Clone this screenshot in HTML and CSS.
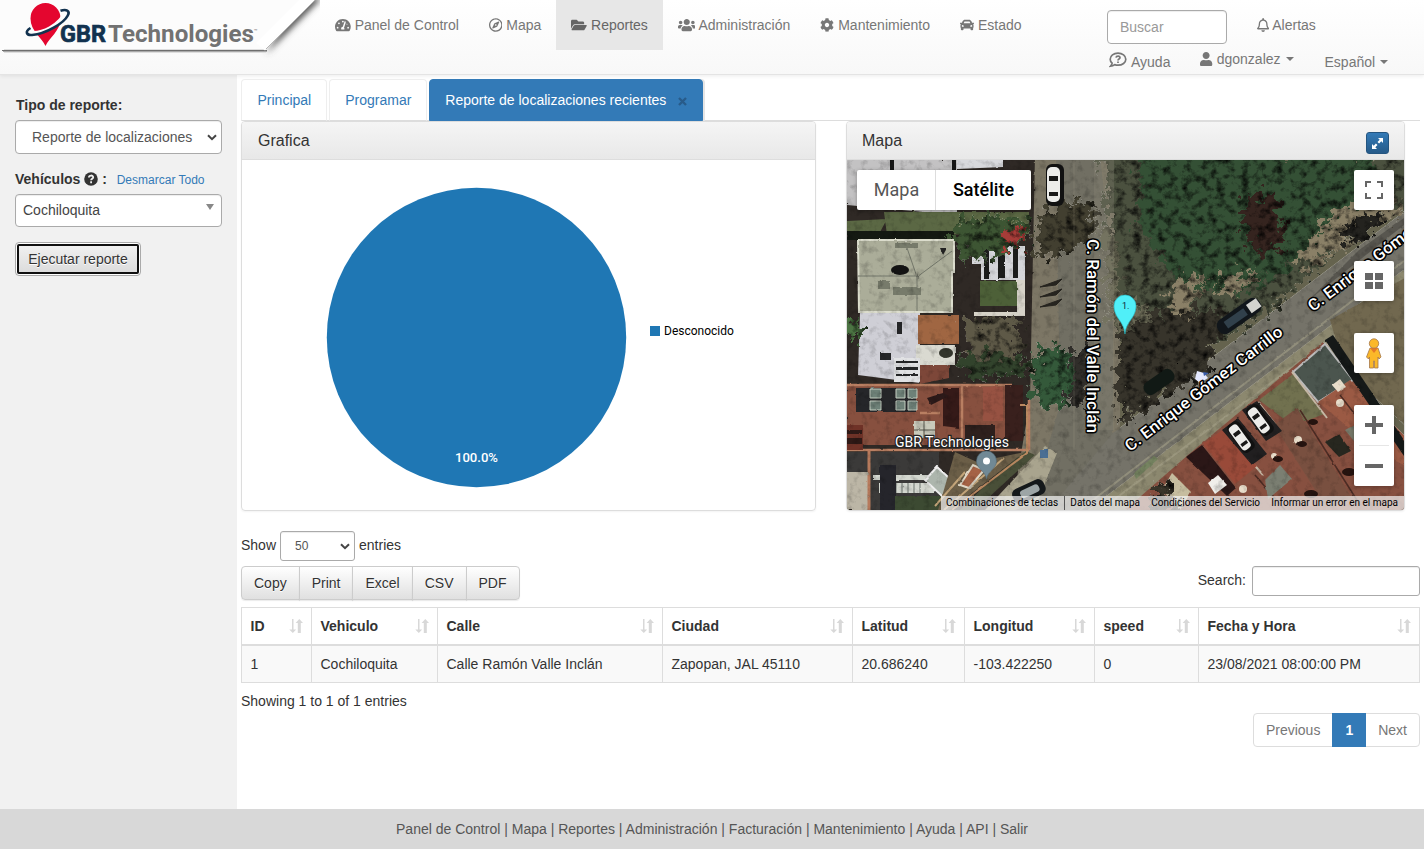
FILE: index.html
```
<!DOCTYPE html>
<html lang="es">
<head>
<meta charset="utf-8">
<title>GBR Technologies - Reportes</title>
<link rel="stylesheet" href="styles.css">
</head>
<body>
<header class="topbar">
  <a class="brand">
    <svg width="320" height="74" viewBox="0 0 320 74">
      <defs>
        <linearGradient id="fold" x1="0" y1="0" x2="1" y2="1"><stop offset="0.5" stop-color="#fff"/><stop offset="1" stop-color="#f4f4f4"/></linearGradient>
        <filter id="blur3" x="-30%" y="-30%" width="160%" height="160%"><feGaussianBlur stdDeviation="3"/></filter>
      </defs>
      <path d="M266 54L322 -2h-26z" fill="#555" filter="url(#blur3)"/>
      <path d="M0 0H315L265 50H0z" fill="#fcfcfc"/>
      <path d="M2 50.500H267" stroke="#6e6e6e"/><path d="M3 51.500H267" stroke="#aaa"/><path d="M4 49.500H266M4 52.500H266" stroke="#dedede"/>
      <path d="M315 0L265 50.500L256 43L299 0z" fill="url(#fold)"/>
      <path d="M315 0L266 49" stroke="#b5b5b5" stroke-width="1"/>
      <path d="M45.500 46C42 38 30.500 31 30.500 18.500a15 15.500 0 0 1 30 0C60.500 31 49 38 45.500 46z" fill="#e4062f"/>
      <path d="M27 32C42 35.500 60 25 66 11" stroke="#fcfcfc" stroke-width="3.500" fill="none"/>
      <path d="M30.500 28C24.500 31.500 26.500 35.500 32 35C46 34 64 23 67.800 15.500C70.500 10.500 66 8.800 60.500 10.800" stroke="#12324f" stroke-width="2.600" fill="none"/>
      <text class="logo-gbr" x="60" y="42" textLength="46" lengthAdjust="spacingAndGlyphs">GBR</text>
      <text class="logo-tech" x="108" y="42" textLength="146" lengthAdjust="spacingAndGlyphs">Technologies</text>
      <text class="logo-tm" x="254" y="33">™</text>
    </svg>
  </a>
  <nav class="mainnav">
    <a><svg class="ic" width="15.750" height="14" viewBox="0 0 576 512"><path fill-rule="evenodd" d="M288 32C129 32 0 161 0 320c0 53 14 102 39 145 6 10 16 15 28 15h442c12 0 22-5 28-15 25-43 39-92 39-145C576 161 447 32 288 32zm0 64a32 32 0 1 1 0 64 32 32 0 0 1 0-64zM96 384a32 32 0 1 1 0-64 32 32 0 0 1 0 64zm48-160a32 32 0 1 1 0-64 32 32 0 0 1 0 64zm247-51l-61 184a63 63 0 0 1 13 59H233c-2-8-9-20-9-32 0-34 27-62 61-64l61-184c8-28 54-13 45 37zm23 51c10-28 50-19 50 0a32 32 0 0 1-50 0zm66 160a32 32 0 1 1 0-64 32 32 0 0 1 0 64z"/></svg> Panel de Control</a>
    <a><svg class="ic" width="13.560" height="14" viewBox="0 0 496 512"><path d="M347.940 129.860L203.600 195.830a31.938 31.938 0 0 0-15.770 15.770l-65.970 144.340c-7.610 16.650 9.540 33.810 26.200 26.200l144.340-65.970a31.938 31.938 0 0 0 15.770-15.770l65.970-144.340c7.610-16.660-9.540-33.810-26.200-26.200zm-77.360 148.720c-12.470 12.470-32.690 12.470-45.160 0-12.470-12.470-12.470-32.690 0-45.160 12.470-12.470 32.690-12.470 45.160 0 12.470 12.470 12.470 32.690 0 45.160zM248 8C111.030 8 0 119.030 0 256s111.030 248 248 248 248-111.030 248-248S384.970 8 248 8zm0 448c-110.280 0-200-89.720-200-200S137.720 56 248 56s200 89.720 200 200-89.720 200-200 200z"/></svg> Mapa</a>
    <a class="current"><svg class="ic" width="15.750" height="14" viewBox="0 0 576 512"><path d="M572.694 292.093L500.270 416.248A63.997 63.997 0 0 1 444.989 448H45.025c-18.523 0-30.064-20.093-20.731-36.093l72.424-124.155A64 64 0 0 1 152 256h399.964c18.523 0 30.064 20.093 20.730 36.093zM152 224h328v-48c0-26.510-21.490-48-48-48H272l-64-64H48C21.490 64 0 85.490 0 112v278.046l69.077-118.418C86.214 242.250 117.989 224 152 224z"/></svg> Reportes</a>
    <a class="tight"><svg class="ic" width="17.500" height="14" viewBox="0 0 640 512"><path d="M96 224c35.300 0 64-28.700 64-64s-28.700-64-64-64-64 28.700-64 64 28.700 64 64 64zm448 0c35.300 0 64-28.700 64-64s-28.700-64-64-64-64 28.700-64 64 28.700 64 64 64zm32 32h-64c-17.600 0-33.500 7.100-45.100 18.600 40.300 22.100 68.900 62 75.100 109.400h66c17.700 0 32-14.300 32-32v-32c0-35.300-28.700-64-64-64zm-256 0c61.900 0 112-50.100 112-112S381.900 32 320 32 208 82.100 208 144s50.100 112 112 112zm76.800 32h-8.300c-20.800 10-43.900 16-68.500 16s-47.600-6-68.500-16h-8.300C179.600 288 128 339.600 128 403.200V432c0 26.500 21.500 48 48 48h288c26.500 0 48-21.500 48-48v-28.800c0-63.600-51.600-115.200-115.200-115.200zm-223.700-13.400C161.500 263.100 145.600 256 128 256H64c-35.300 0-64 28.700-64 64v32c0 17.700 14.300 32 32 32h65.900c6.300-47.400 34.900-87.300 75.200-109.400z"/></svg> Administración</a>
    <a><svg class="ic" width="14" height="14" viewBox="0 0 512 512"><path d="M487.400 315.700l-42.600-24.600c4.300-23.200 4.300-47 0-70.200l42.600-24.600c4.900-2.800 7.100-8.600 5.500-14-11.100-35.600-30-67.800-54.700-94.600-3.800-4.100-10-5.100-14.800-2.300L380.800 110c-17.900-15.400-38.500-27.300-60.800-35.100V25.800c0-5.600-3.900-10.500-9.400-11.700-36.700-8.200-74.300-7.800-109.200 0-5.500 1.200-9.400 6.100-9.400 11.700V75c-22.200 7.900-42.800 19.800-60.800 35.100L88.700 85.500c-4.900-2.800-11-1.900-14.800 2.300-24.700 26.700-43.600 58.900-54.700 94.600-1.700 5.400.6 11.200 5.500 14L67.300 221c-4.300 23.200-4.300 47 0 70.200l-42.600 24.600c-4.900 2.800-7.100 8.600-5.500 14 11.100 35.600 30 67.800 54.700 94.600 3.800 4.100 10 5.100 14.800 2.300l42.600-24.600c17.900 15.400 38.500 27.300 60.800 35.100v49.200c0 5.600 3.900 10.500 9.400 11.700 36.700 8.200 74.300 7.800 109.200 0 5.500-1.200 9.400-6.100 9.400-11.700v-49.200c22.200-7.900 42.800-19.800 60.800-35.100l42.600 24.600c4.900 2.800 11 1.900 14.800-2.300 24.700-26.700 43.600-58.900 54.700-94.600 1.500-5.500-.7-11.300-5.600-14.100zM256 336c-44.100 0-80-35.900-80-80s35.900-80 80-80 80 35.900 80 80-35.900 80-80 80z"/></svg> Mantenimiento</a>
    <a><svg class="ic" width="14" height="14" viewBox="0 0 512 512"><path fill-rule="evenodd" d="M500 176h-60l-22-54C401 84 364 64 330 64H182c-34 0-71 20-88 58l-22 54H12c-8 0-14 7-12 15l6 24c1 5 6 9 12 9h20c-13 12-22 29-22 48v48c0 16 6 31 16 42v54c0 18 14 32 32 32h32c18 0 32-14 32-32v-32h256v32c0 18 14 32 32 32h32c18 0 32-14 32-32v-54c10-11 16-26 16-42v-48c0-19-8-36-22-48h20c6 0 11-4 12-9l6-24c2-8-4-15-12-15zM154 146c5-12 16-18 28-18h148c12 0 23 6 28 18l20 46H134zM96 320c-19 0-32-13-32-32s13-32 32-32 48 29 48 48-29 16-48 16zm320 0c-19 0-48 3-48-16s29-48 48-48 32 13 32 32-13 32-32 32z"/></svg> Estado</a>
  </nav>
  <div class="usernav">
    <div class="row1"><input class="field quick" placeholder="Buscar"><a><svg class="ic" width="12.250" height="14" viewBox="0 0 448 512"><path d="M439.390 362.290c-19.320-20.760-55.470-51.990-55.470-154.290 0-77.700-54.480-139.900-127.940-155.160V32c0-17.670-14.320-32-31.980-32s-31.980 14.330-31.980 32v20.840C118.560 68.100 64.080 130.300 64.080 208c0 102.300-36.150 133.530-55.470 154.290-6 6.450-8.660 14.160-8.610 21.710.110 16.400 12.980 32 32.100 32h383.800c19.120 0 32-15.600 32.100-32 .05-7.550-2.610-15.270-8.610-21.710zM67.530 368c21.220-27.970 44.420-74.330 44.530-159.420 0-.2-.06-.38-.06-.58 0-61.860 50.140-112 112-112s112 50.140 112 112c0 .2-.06.38-.06.58.110 85.100 23.310 131.460 44.530 159.420H67.530zM224 512c35.320 0 63.970-28.650 63.970-64H160.030c0 35.350 28.650 64 63.970 64z"/></svg><span>Alertas</span></a></div>
    <div class="row2">
      <a class="help"><svg width="18" height="16" viewBox="0 0 18 16"><path d="M9 1.200c4.400 0 7.800 2.600 7.800 6s-3.400 6-7.800 6c-1.200 0-2.300-.2-3.300-.6-1 .8-2.500 1.500-4.200 1.600.9-1 1.500-2 1.600-3C1.900 10.100 1.200 8.700 1.200 7.200c0-3.400 3.400-6 7.800-6z" fill="none" stroke="#777" stroke-width="1.700"/><path d="M7 5.700C7.200 3.500 11 3.500 11 5.700c0 1.400-2 1.300-2 2.700M9 9.400v1.600" fill="none" stroke="#777" stroke-width="1.700"/></svg><span>Ayuda</span></a>
      <a class="user"><svg width="12.250" height="14" viewBox="0 0 448 512"><path fill="#777" d="M224 256c70.700 0 128-57.300 128-128S294.700 0 224 0 96 57.300 96 128s57.300 128 128 128zm89.600 32h-16.700c-22.200 10.200-46.900 16-72.900 16s-50.600-5.800-72.900-16h-16.700C60.200 288 0 348.200 0 422.400V464c0 26.500 21.500 48 48 48h352c26.500 0 48-21.500 48-48v-41.600c0-74.200-60.200-134.400-134.400-134.400z"/></svg><span>dgonzalez</span><i class="caret"></i></a>
      <a class="lang"><span>Español</span><i class="caret"></i></a>
    </div>
  </div>
</header>

<div class="shell">
  <aside class="sidebar">
    <label class="lbl">Tipo de reporte:</label>
    <div class="field select"><span>Reporte de localizaciones</span><svg width="10" height="7" viewBox="0 0 10 7"><path d="M1 1.200l4 4 4-4" fill="none" stroke="#444" stroke-width="2"/></svg></div>
    <div class="lbl vehicles">Vehículos <svg width="14" height="14" viewBox="0 0 14 14"><circle cx="7" cy="7" r="6.800" fill="#333"/><path d="M4.900 5.500C5 2.900 9.200 2.900 9.200 5.300c0 1.500-2.100 1.500-2.100 3M7.100 9.300v1.900" fill="none" stroke="#f0f0f0" stroke-width="1.800"/></svg> : <a>Desmarcar Todo</a></div>
    <div class="field vehicle"><span>Cochiloquita</span><i></i></div>
    <button class="run">Ejecutar reporte</button>
  </aside>

  <main class="content">
    <div class="tabs"><a>Principal</a><a>Programar</a><a class="active">Reporte de localizaciones recientes <svg width="9" height="9" viewBox="0 0 9 9"><path d="M1 1l7 7M8 1L1 8" stroke="#285b8a" stroke-width="2.400"/></svg></a></div>
    <div class="panels">
      <section class="panel chart">
        <h3>Grafica</h3>
        <svg width="573" height="350" viewBox="242 160 573 350"><circle cx="476.500" cy="337.500" r="149.700" fill="#1f77b4"/><text class="pct" x="476.500" y="462" text-anchor="middle" fill="#fff" textLength="43" lengthAdjust="spacingAndGlyphs">100.0%</text><rect x="650" y="326" width="10" height="10" fill="#1f77b4"/><text x="664" y="335" fill="#000">Desconocido</text></svg>
      </section>
      <section class="panel map">
        <h3>Mapa <button class="expand"><svg width="13" height="13" viewBox="0 0 13 13"><path d="M7 1h5v5l-1.700-1.700-2.200 2.200-1.600-1.600 2.200-2.200zM6 12H1V7l1.700 1.700 2.200-2.200 1.600 1.600-2.200 2.200z" fill="#fff"/></svg></button></h3>
        <svg class="sat" width="557" height="350" viewBox="847 160 557 350">
          <defs>
            <filter id="leaf" x="-5%" y="-5%" width="110%" height="110%" color-interpolation-filters="sRGB">
              <feTurbulence type="fractalNoise" baseFrequency="0.120" numOctaves="4" seed="11" result="n"/>
              <feDisplacementMap in="SourceGraphic" in2="n" scale="34" xChannelSelector="R" yChannelSelector="G" result="d"/>
              <feColorMatrix in="n" values="2 0 0 0 -.1  2 0 0 0 -.1  2 0 0 0 -.1  0 0 0 0 1" result="g"/>
              <feBlend in="g" in2="d" mode="multiply" result="m"/><feComposite in="m" in2="d" operator="in" result="c"/><feGaussianBlur in="c" stdDeviation=".6"/>
            </filter>
            <filter id="grit" x="0" y="0" width="100%" height="100%" color-interpolation-filters="sRGB">
              <feTurbulence type="fractalNoise" baseFrequency="0.130" numOctaves="4" seed="3" result="n"/>
              <feDisplacementMap in="SourceGraphic" in2="n" scale="2" xChannelSelector="R" yChannelSelector="G" result="d"/>
              <feColorMatrix in="n" values=".5 0 0 0 .74  .5 0 0 0 .74  .5 0 0 0 .74  0 0 0 0 1" result="g"/>
              <feBlend in="g" in2="d" mode="multiply" result="m"/><feComposite in="m" in2="d" operator="in" result="c"/><feGaussianBlur in="c" stdDeviation=".4"/>
            </filter>
            <g id="car"><rect x="-9" y="-21" width="18" height="42" rx="6" fill="#111"/><rect x="-8" y="-18" width="13" height="35" rx="5" fill="#ececea"/><path d="M-6-9h9v5h-9zM-6 7h9v4h-9z" fill="#181818"/></g>
          </defs>
          <rect x="847" y="160" width="557" height="350" fill="#65634e"/>
          <g filter="url(#grit)">
            <path d="M840 155H1075V520H840z" fill="#2f2925"/>
            <path d="M1035 155H1120V440L1040 520H1010L1030 400z" fill="#7c7665"/>
            <path d="M1056 155h44l13 120v160l-60 80h-25l32-110z" fill="#716f63"/>
            <path d="M1040 520L1113 433L1410 207V265L1075 520z" fill="#757369"/>
            <path d="M1075 520L1410 265V300L1130 520z" fill="#8c886f"/>
            <path d="M1080 510L1404 261M1100 510L1404 284" stroke="#a5a189" stroke-width="2" opacity=".6"/>
            <path d="M1330 320L1410 275V430L1345 370z" fill="#71684f"/>
            <path d="M1404 225l-95 75 50-50 45-32z" fill="#4b4a45" opacity=".7"/>
            <path d="M847 160h110v55l-110-10z" fill="#c3c2c3"/><path d="M957 160h46v7l-46 2z" fill="#d8d9dd"/><path d="M890 160h4v24l-4 8zM952 160h4v40h-4z" fill="#161616"/>
            <path d="M847 221l40-2-8 15-32-3zM884 212h145v22l-142 1z" fill="#5b6844"/>
            <path d="M847 231h107v9H847z" fill="#141912"/>
            <path d="M858 240h96v32h-2v40h-93z" fill="#abad99" stroke="#dcddcd" stroke-width="2"/>
            <path d="M858 276h59v35m0-34l35-26M905 242l12 35" fill="none" stroke="#73776a"/>
            <path d="M895 243h23v5h-23zM893 287h28v8h-28zM878 281h12v8h-12z" fill="#777b6b"/><ellipse cx="900" cy="270" rx="9" ry="5" fill="#131313"/><path d="M940 248h7l-4 7z" fill="#222"/>
            <path d="M972 246h53v34h-44v-16h-9z" fill="#d5d6da"/><path d="M984 247h5v32h-5zM998 247h7v31h-7zM1013 248h5v30h-5z" fill="#1c1d1c"/>
            <path d="M980 281h40v25h-40z" fill="#4d6038"/><path d="M1017 280h8v36h-51v-4h43z" fill="#d7d3c8"/>
            <path d="M860 313h60v70l-62-8z" fill="#cfcfd6"/><path d="M918 315h41v29h-41z" fill="#a06642"/><path d="M916 345h39v20h-39z" fill="#dadad1"/><path d="M920 365h29v13l-29 6z" fill="#7d4739"/><ellipse cx="946" cy="353" rx="7" ry="5" fill="#33352c"/>
            <path d="M894 358h26v24h-26z" fill="#e1e2e4"/><path d="M896 361h22v2h-22zm0 6h22v3h-22zm0 7h22v2h-22zM897 322h5v12h-5zM880 353h11v7h-11z" fill="#252628"/>
            <path d="M847 385h160v60H847z" fill="#87503f"/><path d="M847 385h165M962 385v65M847 450h182M920 413h20M1029 400v50" stroke="#b97f62" stroke-width="2.500" fill="none"/>
            <path d="M856 388h60v24h-60z" fill="#252629"/><path d="M943 388h16v40l-16-2z" fill="#351a18"/><path d="M983 387h20v34h-20z" fill="#975242"/><path d="M1005 385h18v56h-18z" fill="#39201d"/>
            <path d="M870 389h11v9h-11zM870 401h11v9h-11zM896 389h9v9h-9zM908 389h9v9h-9zM896 401h9v9h-9zM908 401h9v9h-9z" fill="#6e8178" stroke="#c5cec1"/>
            <path d="M914 421h21v17h-21z" fill="#c9c9ba"/><path d="M924 421v17M914 430h21" stroke="#535349"/>
            <path d="M965 425h30v20h-30z" fill="#2e201d"/><path d="M927 398l16-5 6 3-18 9z" fill="#2c1a19"/>
            <path d="M847 425h16v25h-16z" fill="#6f3227"/><path d="M847 430h15v4h-15zm0 8h15v6h-15z" fill="#2f1916"/>
            <path d="M847 452h92v58h-92z" fill="#3b3a39"/><path d="M847 472h22v38h-22z" fill="#bcb6a6"/><path d="M869 450v60" stroke="#b77a5c" stroke-width="3"/><path d="M873 475h55v5h-55zm6 8h55v10h-55z" fill="#d4d8d0"/><path d="M890 483v10m6-10v10m6-10v10m6-10v10m6-10v10m6-10v10" stroke="#6c756e"/>
            <path d="M880 465h16v45h-16z" fill="#25252b"/><path d="M895 496h48v14h-48z" fill="#3c4a32"/><path d="M925 480l12-13 22 20-14 12z" fill="#adb6ad" stroke="#eee" stroke-width="2"/>
            <path d="M955 452l22 10 48-10-75 58h-12z" fill="#6c5f48"/><path d="M944 510l60-52M935 506l30-34" stroke="#c3a57a" stroke-width="2"/><path d="M960 485l13-20 11 5-15 18z" fill="#a66346" stroke="#e0d8c7" stroke-width="2"/><path d="M996 475l30-24 9 4-60 55h-15z" fill="#494f38"/><path d="M1020 405h7v48l-75 57" stroke="#b98860" stroke-width="2" fill="none"/>
            <path d="M1045 446l12 7-20 50-22 7h-30z" fill="#a9a48e"/><path d="M1040 449h8v9h-8z" fill="#4a6e93"/>
            <path d="M1125 510L1188 455L1323 342L1410 446V515z" fill="#875040"/>
            <path d="M1259 400l34-26 31 40-31 12z" fill="#71714f"/><path d="M1293 372l32-28 28 36-35 22z" fill="#4b554e" stroke="#bbb" stroke-width="2"/>
            <path d="M1292 372l35 46M1258 402l34 44M1224 430l39 45M1327 343l46 55" stroke="#c6b9a6" stroke-width="2"/>
            <path d="M1318 402l32-22 54 55v30l-25-12z" fill="#9b5a44"/><path d="M1274 425l23-17 55 90-24 12z" fill="#795040"/><path d="M1300 410l60 95M1340 395l50 65M1255 475l30 35" stroke="#4c2c24" stroke-width="1.500"/>
            <path d="M1325 340l8-5 71 105v16z" fill="#151918"/>
            <path d="M1186 457l16-12 34 43-9 8z" fill="#2b1717"/><path d="M1203 444l22-16 32 38-22 18z" fill="#994a39"/><path d="M1265 480l15-15 12 14-24 20z" fill="#7b7f72"/><path d="M1345 430l15-8 12 14-14 10z" fill="#77796a"/><path d="M1172 473l19 19-11 18-18-20z" fill="#c6bd9f"/><path d="M1208 483l10-8 9 10-12 9z" fill="#f0eeea"/>
            <path d="M1222 430l16-12 29 36-15 11zM1242 410l15-9 25 30-16 10z" fill="#211f20"/><path d="M1325 442l14-8 12 17-12 6z" fill="#27271f"/>
            <g fill="#e9decb"><circle cx="1298" cy="440" r="4"/><circle cx="1243" cy="489" r="4"/><circle cx="1340" cy="403" r="4"/><circle cx="1274" cy="456" r="3"/><path d="M1332 385l8-6 6 8-8 5z"/></g>
            <g fill="#25130f"><ellipse cx="1302" cy="444" rx="5" ry="3"/><ellipse cx="1349" cy="472" rx="7" ry="4"/><ellipse cx="1311" cy="494" rx="7" ry="4"/><ellipse cx="1278" cy="459" rx="5" ry="3"/><ellipse cx="1313" cy="422" rx="5" ry="3"/></g>
            <path d="M1134 473l20-17 4 3-22 20z" fill="#758360"/>
          </g>
          <g filter="url(#leaf)">
            <path d="M1103 155H1420V202L1345 245L1295 290L1205 355L1125 420L1117 300z" fill="#4b513f"/>
            <path d="M1140 150h240l-20 55-65 60-55 30-60-10-40-60z" fill="#345035"/>
            <path d="M1118 310h110l-20 60-90 55z" fill="#37342b"/>
            <path d="M1245 195h30l12 50-25 10-17-20z" fill="#35241f"/>
            <path d="M1100 220l15 15 8 60 30 20-40 20z" fill="#6b6a56"/>
            <path d="M1177 278l28-4-15 40-20-5zM1215 285l25-14 20 5-30 22zM1340 210l45-18 20 20-60 35-40 20-10-10z" fill="#8a8067"/>
            <path d="M1335 235l30-22 25 5-35 26z" fill="#24231f"/>
            <path d="M955 222l50-6 25 8-5 20-30 10-30 8-10-20z" fill="#3d5533"/>
            <ellipse cx="1013" cy="236" rx="12" ry="9" fill="#a63c38"/>
            <path d="M1042 212l32-13 22 12-2 26-35 22-24-4z" fill="#423f30"/>
            <path d="M1072 350l18-4 4 34-10 28-16-5z" fill="#302e2a"/><ellipse cx="1052" cy="377" rx="21" ry="32" fill="#34593a"/>
            <path d="M965 320h55v50h-50z" fill="#5e5947"/><ellipse cx="995" cy="366" rx="38" ry="12" fill="#32432c"/>
            <path d="M847 320h12v20h-12z" fill="#4c7443"/><path d="M1149 496l15-15 20 32h-35z" fill="#39352a"/>
          </g>
          <path d="M1094 160h20v270h-20z" fill="#8c8876" opacity=".3"/><path d="M1074 160v290" stroke="#b6b09b" opacity=".2"/>
          <use href="#car" transform="translate(1055 185)"/>
          <g transform="translate(1239 316) rotate(55)"><rect x="-8" y="-25" width="16" height="50" rx="7" fill="#11161b"/><path d="M-5-24h10v12H-5z" fill="#d3d3cf"/><path d="M-4-8h8v24h-8z" fill="#31404b"/></g>
          <g transform="translate(1159 382) rotate(55)"><rect x="-7" y="-17" width="14" height="34" rx="6" fill="#111915"/></g>
          <use href="#car" transform="translate(1241 437) rotate(-36) scale(.8)"/><use href="#car" transform="translate(1260 420) rotate(-36) scale(.8)"/>
          <g transform="translate(1028 492) rotate(65)"><rect x="-8" y="-18" width="16" height="34" rx="6" fill="#15191b"/><rect x="-4" y="-12" width="8" height="20" rx="3" fill="#9da5a6"/></g>
          <path d="M1197 371l7 2 4 5-8 5-5-4z" fill="#e5e9ff"/><path d="M1203 372l6 1-5 3z" fill="#385ba8"/>
          <path d="M1040 287l22-8-6 6zm0 10l22-8-6 6zm0 10l22-8-6 6z" fill="#26241f" stroke="#26241f"/>
          <g class="street">
            <text transform="translate(1087 239) rotate(90)" textLength="194" lengthAdjust="spacingAndGlyphs">C. Ramón del Valle Inclán</text>
            <text transform="translate(1130 452) rotate(-37.500)" textLength="194" lengthAdjust="spacingAndGlyphs">C. Enrique Gómez Carrillo</text>
            <text transform="translate(1313 312) rotate(-37.500)" textLength="194" lengthAdjust="spacingAndGlyphs">C. Enrique Gómez Carrillo</text>
          </g>
          <text class="poi" x="895" y="447" textLength="114">GBR Technologies</text>
          <path d="M986.500 479c-1-8-10-10-10-18a10 10 0 0 1 20 0c0 8-9 10-10 18z" fill="#718995" stroke="#536c79" stroke-width=".6"/><circle cx="986.500" cy="461" r="3.500" fill="#fff"/>
          <path d="M1125 334c-1-13-11-16-11-28a11 11 0 0 1 22 0c0 12-10 15-11 28z" fill="#50eff8" stroke="#27bdc9" stroke-width=".6"/><text class="num" x="1122" y="309">1.</text>
        </svg>
        <div class="maptype"><span>Mapa</span><b>Satélite</b></div>
        <div class="ctl full"><svg width="18" height="18" viewBox="0 0 18 18"><path d="M1 6V1h5M12 1h5v5M17 12v5h-5M6 17H1v-5" fill="none" stroke="#666" stroke-width="2"/></svg></div>
        <div class="ctl tiles"><svg width="18" height="16" viewBox="0 0 18 16"><path d="M0 0h8v7H0zM10 0h8v7h-8zM0 9h8v7H0zM10 9h8v7h-8z" fill="#666"/></svg></div>
        <div class="ctl peg"><svg width="18" height="31" viewBox="0 0 18 31"><path d="M5 10h8l3 9-2 2-1-2v11H9.500v-7h-1v7H4.500V19l-1 2-2-2z" fill="#fbb829" stroke="#a4774b" stroke-width=".8"/><path d="M5 10h8l-4 5z" fill="#e67927"/><circle cx="9" cy="5.500" r="4.700" fill="#fbb829" stroke="#a4774b" stroke-width=".8"/></svg></div>
        <div class="ctl zoom"><svg width="40" height="81" viewBox="0 0 40 81"><path d="M11 20h18M20 11v18M11 61h18" stroke="#666" stroke-width="4"/><path d="M5 40.500h30" stroke="#e6e6e6"/></svg></div>
        <div class="attrib"><span>Combinaciones de teclas</span><span>Datos del mapa</span><span>Condiciones del Servicio</span><span>Informar un error en el mapa</span></div>
      </section>
    </div>

    <div class="length">Show <div class="field count"><span>50</span><svg width="10" height="7" viewBox="0 0 10 7"><path d="M1 1.200l4 4 4-4" fill="none" stroke="#444" stroke-width="2"/></svg></div> entries</div>
    <div class="tools">
      <div class="btns"><button>Copy</button><button>Print</button><button>Excel</button><button>CSV</button><button>PDF</button></div>
      <label class="find">Search: <input class="field"></label>
    </div>
    <svg class="symbols"><symbol id="sort" viewBox="0 0 14 14"><path d="M3 0h1.500v10.500H7.200L3.800 14 .3 10.500H3zM8.800 14h3V4h2.200L10.300 0 6.600 4h2.200z" fill="#d8d8d8"/></symbol></svg>
    <table class="grid">
      <colgroup><col class="c1"><col class="c2"><col class="c3"><col class="c4"><col class="c5"><col class="c6"><col class="c7"><col class="c8"></colgroup>
      <thead><tr>
        <th><div>ID<svg><use href="#sort"/></svg></div></th><th><div>Vehiculo<svg><use href="#sort"/></svg></div></th><th><div>Calle<svg><use href="#sort"/></svg></div></th><th><div>Ciudad<svg><use href="#sort"/></svg></div></th><th><div>Latitud<svg><use href="#sort"/></svg></div></th><th><div>Longitud<svg><use href="#sort"/></svg></div></th><th><div>speed<svg><use href="#sort"/></svg></div></th><th><div>Fecha y Hora<svg><use href="#sort"/></svg></div></th>
      </tr></thead>
      <tbody><tr><td>1</td><td>Cochiloquita</td><td>Calle Ramón Valle Inclán</td><td>Zapopan, JAL 45110</td><td>20.686240</td><td>-103.422250</td><td>0</td><td>23/08/2021 08:00:00 PM</td></tr></tbody>
    </table>
    <div class="info">Showing 1 to 1 of 1 entries</div>
    <div class="pager"><a>Previous</a><a class="on">1</a><a>Next</a></div>
  </main>
</div>
<footer class="foot">Panel de Control | Mapa | Reportes | Administración | Facturación | Mantenimiento | Ayuda | API | Salir</footer>
</body>
</html>
```
FILE: styles.css
```
* { box-sizing: border-box; }
body { margin: 0; height: 849px; overflow: hidden; display: flex; flex-direction: column; background: #fff; color: #333; font: 14px/20px "Liberation Sans", Arial, sans-serif; }
button, input { font: inherit; color: inherit; }

.topbar { position: relative; z-index: 2; flex: none; height: 75px; display: flex; background: linear-gradient(#fff, #f8f8f8); border-bottom: 1px solid #e4e4e4; box-shadow: 0 1px 4px rgba(0,0,0,.08); color: #777; }
.brand { width: 320px; height: 74px; flex: none; }
.brand svg { display: block; }
.logo-gbr, .logo-tech { font: 700 24px Roboto, sans-serif; fill: #12324f; stroke: #12324f; stroke-width: .7px; }
.logo-tech { fill: #727272; stroke: none; }
.logo-tm { font: 6px Roboto, sans-serif; fill: #777; }
.mainnav { display: flex; height: 50px; }
.mainnav a { padding: 15px; white-space: nowrap; }
.mainnav .current { background: #e7e7e7; color: #666; }
.ic { vertical-align: -2px; fill: currentColor; }
.usernav { margin-left: auto; width: 317px; padding-top: 10px; }
.row1 { display: flex; gap: 30px; height: 34px; }
.row1 a { display: flex; align-items: center; gap: 3px; height: 30px; }
.field { background: #fff; border: 1px solid #aaa; border-radius: 4px; box-shadow: inset 0 1px 1px rgba(0,0,0,.075); }
.quick { width: 120px; height: 34px; padding: 6px 12px; }
.quick::placeholder { color: #999; opacity: 1; }
.row2 { display: flex; align-items: flex-start; }
.row2 a { display: flex; align-items: center; }
.help { padding: 8px 0 0 2px; gap: 4px; }
.help svg { margin-top: -4px; }
.user { margin-left: 30px; padding-top: 5px; gap: 4px; }
.lang { margin-left: 31px; padding-top: 8px; gap: 4px; }
.caret { border: 4px solid transparent; border-top-color: #777; border-bottom: 0; margin-left: 1px; }

.shell { flex: 1; display: flex; min-height: 0; }
.sidebar { width: 237px; background: #f1f1f1; padding: 20px 15px; flex: none; }
.lbl { display: block; font-weight: 700; margin-bottom: 5px; padding-left: 1px; }
.select { width: 207px; height: 34px; padding: 0 4px 0 16px; display: flex; align-items: center; gap: 10px; color: #555; }
.select span { flex: 1; white-space: nowrap; }
.vehicles { margin: 15px 0 4px; padding: 0; }
.vehicles svg { vertical-align: -2px; }
.vehicles a { font-size: 12px; font-weight: 400; color: #337ab7; margin-left: 6px; }
.vehicle { width: 207px; height: 33px; padding: 5px 7px; display: flex; justify-content: space-between; color: #444; }
.vehicle i { border: 4px solid transparent; border-top: 6px solid #888; border-bottom: 0; height: 6px; margin-top: 4px; }
.run { margin-top: 15px; height: 34px; width: 126px; padding: 0; border: 1px solid #aaa; border-radius: 4px; background: linear-gradient(#f2f2f2, #dadada); outline: 2px solid #101010; outline-offset: -4px; box-shadow: inset 0 0 0 1px #fff; text-shadow: 0 1px 0 #fff; }

.content { width: 1187px; padding: 4px 4px 0; }
.tabs { height: 42px; display: flex; gap: 2px; border-bottom: 1px solid #ddd; }
.tabs a { height: 42px; padding: 10px 14.5px 11px 15.5px; border: 1px solid #eee; border-bottom-color: #ddd; border-radius: 4px 4px 0 0; color: #337ab7; white-space: nowrap; }
.tabs .active { background: #337ab7; border-color: #337ab7; color: #fff; width: 274px; box-shadow: 2px 0 0 #e5e5e5; }
.tabs .active svg { margin-left: 8px; vertical-align: -1px; }
.panels { display: flex; gap: 30px; }
.panel { width: 575px; height: 390px; border: 1px solid #ddd; border-radius: 4px; box-shadow: 0 1px 2px rgba(0,0,0,.05); position: relative; overflow: hidden; }
.panel.map { width: 559px; }
.panel h3 { margin: 0; height: 38px; padding: 9px 15px 7px; border-bottom: 1px solid #ddd; background: linear-gradient(#f5f5f5, #e8e8e8); font-size: 16px; line-height: 20px; font-weight: 400; display: flex; justify-content: space-between; }
.panel > svg { display: block; }
.chart h3 { padding-left: 16px; }
.chart text { font: 12px Roboto, sans-serif; }
.chart .pct { font-weight: 500; font-size: 12.5px; }
.expand { width: 23px; height: 22px; margin-top: 1px; padding: 0; display: grid; place-items: center; border: 1px solid #245580; border-radius: 3px; background: linear-gradient(#337ab7, #265a88); }
.street text { font: 500 16px Roboto, sans-serif; fill: #fff; stroke: #000; stroke-width: 3px; paint-order: stroke; stroke-linejoin: round; }
.poi { font: 14px Roboto, sans-serif; fill: #fff; stroke: #222; stroke-width: 2.500px; paint-order: stroke; }
.num { font: 9px Roboto, sans-serif; fill: #123; }
.maptype, .ctl { position: absolute; background: #fff; border-radius: 2px; box-shadow: 0 1px 4px rgba(0,0,0,.3); }
.maptype { left: 10px; top: 48px; width: 174px; height: 40px; display: flex; font: 18px/40px Roboto, sans-serif; }
.maptype span { width: 79px; padding-left: 1px; text-align: center; color: #565656; border-right: 1px solid #ddd; }
.maptype b { flex: 1; text-align: center; font-weight: 500; color: #000; }
.ctl { right: 10px; width: 40px; height: 40px; display: grid; place-items: center; }
.full { top: 48px; } .tiles { top: 139px; } .peg { top: 211px; } .zoom { top: 283px; height: 81px; }
.attrib { position: absolute; right: 0; bottom: 0; width: 463px; height: 14px; padding: 0 6px 0 5px; background: rgba(245,245,245,.7); font: 10px/14px Roboto, sans-serif; color: #000; display: flex; justify-content: space-between; white-space: nowrap; }
.attrib span + span { padding-left: 5px; }
.attrib span:nth-child(2) { border-left: 1px solid #555; }

.length { display: flex; align-items: center; gap: 4px; height: 28px; margin: 20px 0 7px; }
.count { width: 75px; height: 30px; margin-top: 2px; padding: 0 4px 0 14px; display: flex; justify-content: space-between; align-items: center; font-size: 12px; color: #555; border-radius: 3px; }
.tools { display: flex; justify-content: space-between; height: 34px; }
.btns { display: flex; }
.btns button { height: 34px; padding: 0 12px; border: 1px solid #ccc; margin-left: -1px; background: linear-gradient(#fff, #e0e0e0); text-shadow: 0 1px 0 #fff; box-shadow: 0 1px 1px rgba(0,0,0,.08); }
.btns button:first-child { border-radius: 4px 0 0 4px; margin-left: 0; }
.btns button:last-child { border-radius: 0 4px 4px 0; }
.find { display: flex; gap: 6px; line-height: 28px; }
.find input { width: 168px; height: 30px; border-radius: 3px; }
.symbols { display: none; }
.grid { width: 1179px; margin-top: 7px; border-collapse: collapse; table-layout: fixed; }
.c1 { width: 70px; } .c2 { width: 126px; } .c3 { width: 225px; } .c4 { width: 190px; } .c5 { width: 112px; } .c6 { width: 130px; } .c7 { width: 104px; } .c8 { width: 221px; }
.grid th, .grid td { border: 1px solid #ddd; padding: 8px 8px 8px 8.5px; height: 38px; text-align: left; }
.grid th { border-bottom-width: 2px; height: 37px; padding-bottom: 7px; }
.grid th div { display: flex; justify-content: space-between; align-items: center; }
.grid th svg { width: 14px; height: 14px; }
.grid td { background: #f9f9f9; }
.info { margin-top: 8px; }
.pager { display: flex; justify-content: flex-end; margin-top: 2px; }
.pager a { height: 34px; padding: 6px 12px; border: 1px solid #ddd; color: #777; margin-left: -1px; }
.pager a:first-child { border-radius: 4px 0 0 4px; }
.pager a:last-child { border-radius: 0 4px 4px 0; }
.pager .on { background: #337ab7; border-color: #337ab7; color: #fff; font-weight: 700; z-index: 1; }
.foot { flex: none; height: 40px; background: #d8d8d8; color: #555; text-align: center; line-height: 40px; }
```
